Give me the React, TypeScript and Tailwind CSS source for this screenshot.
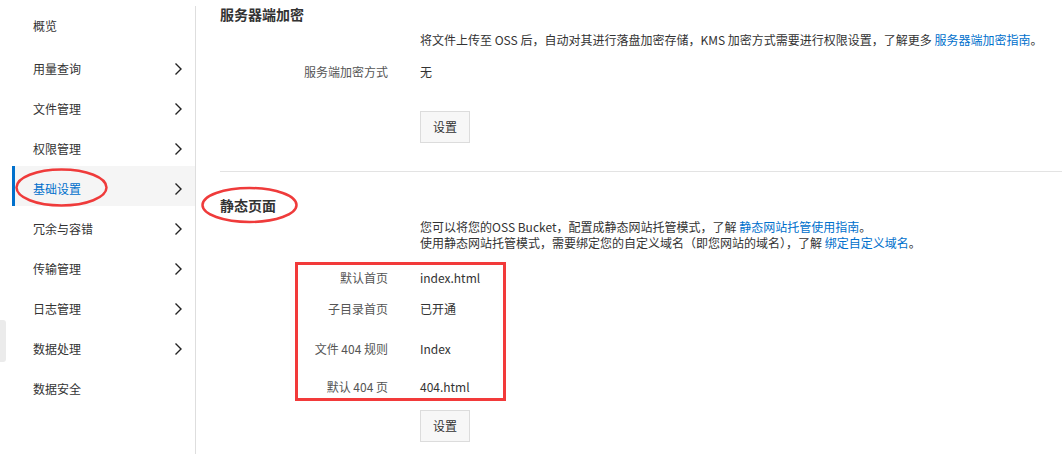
import { useState } from "react";

type NavItem = { label: string; arrow: boolean };

const navItems: NavItem[] = [
  { label: "用量查询", arrow: true },
  { label: "文件管理", arrow: true },
  { label: "权限管理", arrow: true },
  { label: "基础设置", arrow: true },
  { label: "冗余与容错", arrow: true },
  { label: "传输管理", arrow: true },
  { label: "日志管理", arrow: true },
  { label: "数据处理", arrow: true },
  { label: "数据安全", arrow: false },
];

const staticRows = [
  { label: "默认首页", value: "index.html", h: "h-[31px]" },
  { label: "子目录首页", value: "已开通", h: "h-[40px]" },
  { label: "文件 404 规则", value: "Index", h: "h-[38px]" },
  { label: "默认 404 页", value: "404.html", h: "h-[32px]" },
];

function Chevron() {
  return (
    <svg width="9" height="14" viewBox="0 0 9 14" className="shrink-0">
      <polyline points="1.5,1.5 7,7 1.5,12.5" fill="none" stroke="#222" strokeWidth="1.4" />
    </svg>
  );
}

function SetButton() {
  return (
    <button className="w-[50px] h-[32px] border border-[#dcdcdc] bg-[#f7f7f7] text-[12px] text-[#333]">
      设置
    </button>
  );
}

function Sidebar() {
  const [active, setActive] = useState<string>("基础设置");
  return (
    <aside className="w-[196px] shrink-0 mt-[6px] border-r border-[#dedede] text-[12px] text-[#333]">
      <div className="h-10 flex items-center pl-[33px]">概览</div>
      {navItems.map((item) => {
        const isActive = item.label === active;
        return (
          <div
            key={item.label}
            onClick={() => setActive(item.label)}
            className={`h-10 ml-[12px] flex items-center justify-between pr-[12px] pt-[6px] border-l-[3px] ${
              isActive ? "bg-[#f5f5f5] border-[#0070cc] text-[#0070cc]" : "border-transparent"
            } pl-[18px]`}
          >
            <span>{item.label}</span>
            {item.arrow && <Chevron />}
          </div>
        );
      })}
    </aside>
  );
}

export default function App() {
  return (
    <div
      className="relative w-[1062px] h-[454px] bg-white overflow-hidden flex"
      style={{ fontFamily: '"Noto Sans CJK SC", "Noto Sans", sans-serif' }}
    >
      <div className="absolute left-0 top-[320px] w-[6px] h-[42px] bg-[#ebebeb] rounded-r-[3px]" />
      <Sidebar />

      <main className="flex-1 pl-[24px] text-[12px] text-[#333]">
        <h2 className="h-[28px] pt-[4px] text-[14px] font-bold leading-[20px]">服务器端加密</h2>
        <div className="grid grid-cols-[168px_1fr] gap-x-[32px]">
          <div />
          <p className="h-[24px] leading-[24px]">
            将文件上传至 OSS 后，自动对其进行落盘加密存储，KMS 加密方式需要进行权限设置，了解更多{" "}
            <a className="text-[#0070cc]">服务器端加密指南</a>。
          </p>
          <div className="h-[40px] leading-[40px] text-right text-[#555]">服务端加密方式</div>
          <div className="h-[40px] leading-[40px]">无</div>
          <div />
          <div className="pt-[19px]">
            <SetButton />
          </div>
        </div>
        <div className="mt-[28px] border-t border-[#e3e3e3]" />

        <h2 className="mt-[23px] h-[24px] text-[14px] font-bold leading-[20px]">静态页面</h2>
        <div className="grid grid-cols-[168px_1fr] gap-x-[32px]">
          <div />
          <div className="leading-[16px]">
            <p>
              您可以将您的OSS Bucket，配置成静态网站托管模式，了解{" "}
              <a className="text-[#0070cc]">静态网站托管使用指南</a>。
            </p>
            <p>
              使用静态网站托管模式，需要绑定您的自定义域名（即您网站的域名），了解{" "}
              <a className="text-[#0070cc]">绑定自定义域名</a>。
            </p>
          </div>
          <div className="h-[18px] col-span-2" />
          {staticRows.map((row) => (
            <div key={row.label} className="contents">
              <div className={`${row.h} text-right text-[#555]`}>{row.label}</div>
              <div className={row.h}>{row.value}</div>
            </div>
          ))}
          <div />
          <div>
            <SetButton />
          </div>
        </div>
      </main>

      {/* annotations drawn over the screenshot */}
      <svg className="absolute left-0 top-0 pointer-events-none" width="1062" height="454">
        <ellipse cx="61.5" cy="187.5" rx="45" ry="18" fill="none" stroke="#ef3b3b" strokeWidth="2.5" />
        <ellipse cx="249.5" cy="205" rx="47" ry="17" fill="none" stroke="#ef3b3b" strokeWidth="2.5" />
        <rect x="296.5" y="263.5" width="208" height="136" fill="none" stroke="#f23a3a" strokeWidth="3" />
      </svg>
    </div>
  );
}
